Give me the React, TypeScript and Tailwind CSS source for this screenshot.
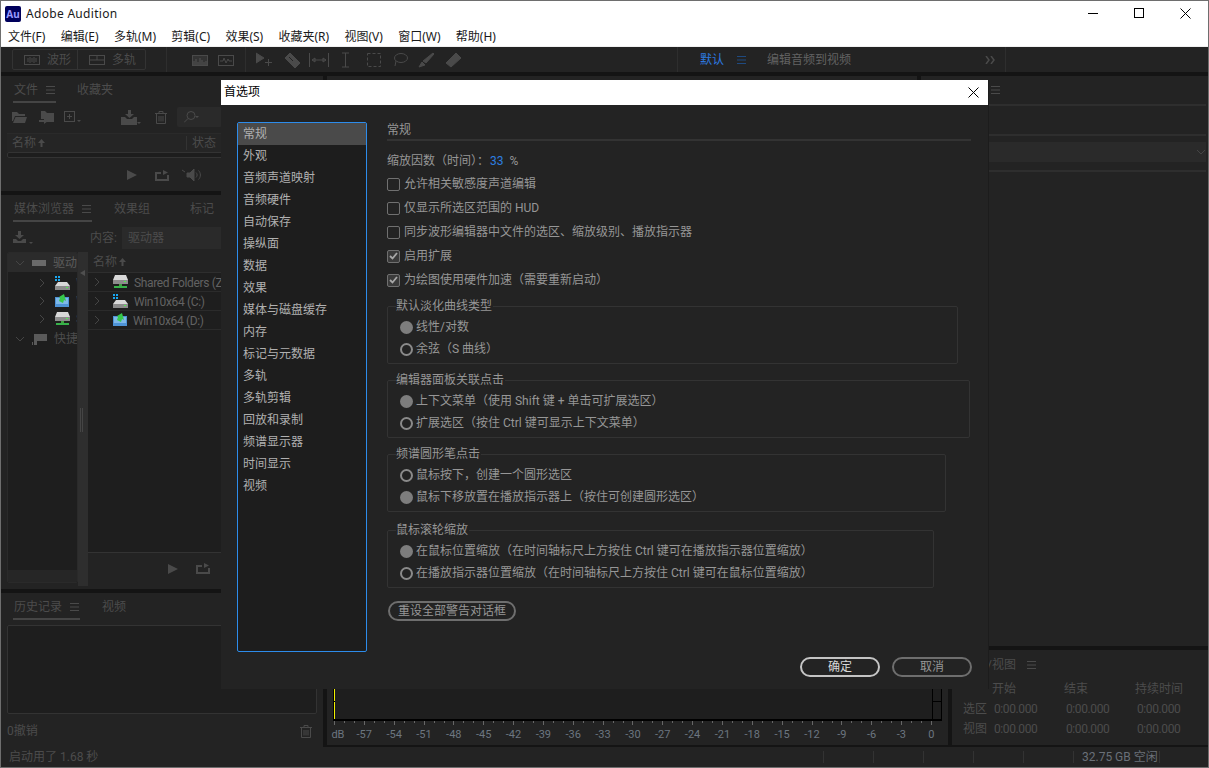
import type { ReactNode } from "react";

const menus = ["文件(F)", "编辑(E)", "多轨(M)", "剪辑(C)", "效果(S)", "收藏夹(R)", "视图(V)", "窗口(W)", "帮助(H)"];
const prefs = ["常规", "外观", "音频声道映射", "音频硬件", "自动保存", "操纵面", "数据", "效果", "媒体与磁盘缓存", "内存", "标记与元数据", "多轨", "多轨剪辑", "回放和录制", "频谱显示器", "时间显示", "视频"];
const scale = ["dB", "-57", "-54", "-51", "-48", "-45", "-42", "-39", "-36", "-33", "-30", "-27", "-24", "-21", "-18", "-15", "-12", "-9", "-6", "-3", "0"];

const Burger = ({ color = "#4a4a4a" }: { color?: string }) => (
  <svg width="9" height="8" viewBox="0 0 9 8" stroke={color} className="shrink-0">
    <path d="M0 .5h9M0 4h9M0 7.5h9" />
  </svg>
);

const Tab = ({ label, width, burger }: { label: string; width: number; burger?: boolean }) => (
  <div className="flex flex-col" style={{ width }}>
    <div className="flex h-[16px] items-center justify-between pl-px pr-px leading-4">
      <span>{label}</span>
      {burger && <Burger />}
    </div>
    {burger && <div className="mt-[3px] h-[2px] bg-[#454545]" />}
  </div>
);

const Trash = () => (
  <svg width="12" height="13" viewBox="0 0 12 13" fill="none" stroke="#4a4a4a">
    <path d="M0 2.5h12M4 2.5V.5h4v2M1.5 2.5v10h9v-10M4 5v5.5M6 5v5.5M8 5v5.5" />
  </svg>
);

const SortArrow = () => (
  <svg width="7" height="8" viewBox="0 0 7 8" fill="#4a4a4a" className="ml-[2px]"><path d="M3.500 0L7 4H4.500v4h-2V4H0z" /></svg>
);

const PlayRow = ({ speaker }: { speaker?: boolean }) => (
  <div className="flex items-center gap-[18px]">
    <svg width="10" height="10" viewBox="0 0 10 10" fill="#4a4a4a"><path d="M0 0l10 5-10 5z" /></svg>
    <svg width="14" height="11" viewBox="0 0 14 11" fill="none" stroke="#4a4a4a" strokeWidth="2">
      <path d="M6 3H1v7h12V5" />
      <path d="M8 0l5 2.500-5 2.500z" fill="#4a4a4a" stroke="none" />
    </svg>
    {speaker && (
      <svg width="20" height="12" viewBox="0 0 20 12" fill="none" stroke="#4a4a4a" className="-ml-[5px]">
        <path d="M0 1l3 2M5 4h3l4-4v12l-4-4H5z" fill="#4a4a4a" />
        <path d="M14 3.500c1.500 1.500 1.500 3.500 0 5M16.500 1.500c2.500 2.500 2.500 6.500 0 9" />
      </svg>
    )}
  </div>
);

const Drive = () => (
  <svg width="15" height="14" viewBox="0 0 15 14" className="shrink-0">
    <path d="M2 0h11l2 5H0z" fill="#d8d8d8" />
    <rect x="0" y="5" width="15" height="4" fill="#8c8c8c" />
    <rect x="11" y="6" width="2" height="1" fill="#4ef04e" />
    <rect x="6" y="9" width="3" height="2" fill="#3f9f3f" />
    <rect x="1" y="11" width="13" height="2" fill="#37b24a" />
  </svg>
);

const WinDrive = () => (
  <svg width="15" height="14" viewBox="0 0 15 14" className="shrink-0">
    <rect x="0" y="0" width="2" height="2" fill="#19a7f0" />
    <rect x="3" y="0" width="2" height="2" fill="#19a7f0" />
    <rect x="0" y="3" width="2" height="2" fill="#19a7f0" />
    <rect x="3" y="3" width="2" height="2" fill="#19a7f0" />
    <path d="M3 6h9l3 4H0z" fill="#d8d8d8" />
    <rect x="0" y="10" width="15" height="4" fill="#8c8c8c" />
    <rect x="11" y="11" width="2" height="1" fill="#4ef04e" />
  </svg>
);

const GreenDrive = () => (
  <svg width="14" height="14" viewBox="0 0 14 14" className="shrink-0">
    <rect x="0" y="3" width="14" height="10" fill="#4e93d6" />
    <rect x="1" y="4" width="12" height="6" fill="#7fb8e8" />
    <path d="M9 0L4 3l1 1-1 3 4 2 1-3 2 1z" fill="#36c84a" />
  </svg>
);

const Chevron = ({ down }: { down?: boolean }) => (
  <svg width="8" height="8" viewBox="0 0 8 8" fill="none" stroke="#454545" className="shrink-0">
    <path d={down ? "M0 2l4 4 4-4" : "M2 0l4 4-4 4"} />
  </svg>
);

const ToolIcon = ({ children, w = 16, className = "" }: { children: ReactNode; w?: number; className?: string }) => (
  <svg width={w} height="16" viewBox={`0 0 ${w} 16`} fill="none" stroke="#4a4a4a" className={`shrink-0 ${className}`}>
    {children}
  </svg>
);

const Check = ({ on, label }: { on?: boolean; label: string }) => (
  <div className="flex h-6 items-center gap-[4px]">
    <span className={`flex size-[13px] items-center justify-center rounded-[2px] border-[1.5px] border-[#707070] ${on ? "bg-[#3a3a3a]" : ""}`}>
      {on && (
        <svg width="9" height="8" viewBox="0 0 9 8" fill="none" stroke="#a8a8a8" strokeWidth="1.800">
          <path d="M1 4l2.500 2.500L8 1" />
        </svg>
      )}
    </span>
    <span>{label}</span>
  </div>
);

const Radio = ({ on, label }: { on?: boolean; label: string }) => (
  <div className="flex h-[22px] items-center gap-[3px]">
    {on ? (
      <span className="size-[13px] rounded-full bg-[#7d7d7d]" />
    ) : (
      <span className="size-[13px] rounded-full border-2 border-[#8a8a8a]" />
    )}
    <span>{label}</span>
  </div>
);

const Group = ({ title, width, mt, options }: { title: string; width: string; mt: string; options: [string, boolean][] }) => (
  <div className={`${width} ${mt} h-[58px] rounded-[2px] border border-[#333333] pl-[12px]`}>
    <div className="-mt-[9px] mb-[2px] -ml-[4px] w-fit bg-[#232323] pr-px leading-[16px]">{title}</div>
    {options.map(([label, on]) => (
      <Radio key={label} label={label} on={on} />
    ))}
  </div>
);

const PrefsDialog = () => (
  <div className="absolute top-[79px] left-[220px] flex h-[609px] w-[767px] flex-col bg-[#232323] text-[12px] text-[#969696] shadow-[1px_0_0_#1c1c1c]">
    <div className="flex h-[25px] shrink-0 items-center justify-between bg-white pb-px pl-[3px] text-black">
      <span>首选项</span>
      <svg width="11" height="11" viewBox="0 0 11 11" stroke="#000" className="mr-[9px]">
        <path d="M.5.5l10 10M10.500.5l-10 10" />
      </svg>
    </div>
    <div className="flex flex-1 pt-[17px] pl-[16px]">
      <div className="h-[530px] w-[130px] shrink-0 rounded-[2px] border border-[#2d8ceb] bg-[#1d1d1d] text-[#b0b0b0]">
        {prefs.map((p, i) => (
          <div key={p} className={`flex h-[22px] items-center pb-px pl-[5px] ${i === 0 ? "bg-[#4a4a4a]" : ""}`}>
            {p}
          </div>
        ))}
      </div>
      <div className="ml-[20px] flex-1 pr-[17px]">
        <div className="h-[19px] border-b-2 border-[#333333] leading-[16px]">常规</div>
        <div className="mt-[12px] flex h-[16px] items-center">
          缩放因数（时间）：<span className="ml-px text-[#2d7fe0]">33</span>
          <span className="ml-[6px]">%</span>
        </div>
        <div className="mt-[3px]">
          <Check label="允许相关敏感度声道编辑" />
          <Check label="仅显示所选区范围的 HUD" />
          <Check label="同步波形编辑器中文件的选区、缩放级别、播放指示器" />
          <Check on label="启用扩展" />
          <Check on label="为绘图使用硬件加速（需要重新启动）" />
        </div>
        <Group title="默认淡化曲线类型" width="w-[571px]" mt="mt-[14px]" options={[["线性/对数", true], ["余弦（S 曲线）", false]]} />
        <Group title="编辑器面板关联点击" width="w-[583px]" mt="mt-[16px]" options={[["上下文菜单（使用 Shift 键 + 单击可扩展选区）", true], ["扩展选区（按住 Ctrl 键可显示上下文菜单）", false]]} />
        <Group title="频谱圆形笔点击" width="w-[559px]" mt="mt-[16px]" options={[["鼠标按下，创建一个圆形选区", false], ["鼠标下移放置在播放指示器上（按住可创建圆形选区）", true]]} />
        <Group title="鼠标滚轮缩放" width="w-[547px]" mt="mt-[18px]" options={[["在鼠标位置缩放（在时间轴标尺上方按住 Ctrl 键可在播放指示器位置缩放）", true], ["在播放指示器位置缩放（在时间轴标尺上方按住 Ctrl 键可在鼠标位置缩放）", false]]} />
        <div className="mt-[13px] ml-px flex h-[20px] w-[128px] items-center justify-center rounded-full border-2 border-[#6e6e6e]">重设全部警告对话框</div>
      </div>
    </div>
    <div className="flex justify-end gap-[12px] pr-[16px] pb-[12px]">
      <div className="flex h-[20px] w-[80px] items-center justify-center rounded-full border-2 border-[#c4c4c4] text-[#d8d8d8]">确定</div>
      <div className="flex h-[20px] w-[80px] items-center justify-center rounded-full border-2 border-[#6e6e6e]">取消</div>
    </div>
  </div>
);

const TitleBar = () => (
  <div className="flex h-[25px] shrink-0 items-center justify-between bg-white font-['Noto_Sans','Noto_Sans_CJK_SC',sans-serif] text-[12px] text-[#1a1a1a]">
    <div className="flex items-center gap-[5px] pl-[4px]">
      <span className="flex size-[16px] items-center justify-center rounded-[2px] bg-[#00005b] text-[10px] leading-none font-bold text-[#9999ff]">Au</span>
      <span className="tracking-[.3px]">Adobe Audition</span>
    </div>
    <div className="flex">
      <span className="flex w-[46px] justify-center">
        <svg width="10" height="10" viewBox="0 0 10 10" stroke="#000"><path d="M0 5.500h10" /></svg>
      </span>
      <span className="flex w-[46px] justify-center">
        <svg width="10" height="10" viewBox="0 0 10 10" stroke="#000" fill="none"><rect x=".5" y=".5" width="9" height="9" /></svg>
      </span>
      <span className="flex w-[46px] justify-center">
        <svg width="11" height="11" viewBox="0 0 11 11" stroke="#000"><path d="M.5.5l10 10M10.500.5l-10 10" /></svg>
      </span>
    </div>
  </div>
);

const Toolbar = () => (
  <div className="flex h-[25px] shrink-0 items-center bg-[#232323] text-[12px] text-[#4c4c4c]">
    <div className="ml-[11px] flex h-[21px] w-[134px] items-center rounded-[2px] border border-[#333333]">
      <div className="flex h-full w-[65px] items-center gap-[7px] border-r border-[#333333] pl-[11px]">
        <ToolIcon>
          <rect x=".5" y="3.500" width="15" height="9" />
          <path d="M4 6v4M6 5v6M8 6v4M10 5v6M12 6v4" />
        </ToolIcon>
        <span>波形</span>
      </div>
      <div className="flex items-center gap-[7px] pl-[11px]">
        <ToolIcon>
          <rect x=".5" y="3.500" width="15" height="9" />
          <path d="M.5 8h15M8 3.500V8" />
        </ToolIcon>
        <span>多轨</span>
      </div>
    </div>
    <div className="ml-[20px] h-[25px] w-px bg-[#2e2e2e]" />
    <div className="ml-[25px] flex gap-[10px]">
      <ToolIcon>
        <rect x=".5" y="3.500" width="15" height="10" fill="#333333" />
        <path d="M2 13V9M4 13V7M6 13V10M8 13V6M10 13V8M12 13V10M14 13V9" stroke="#555555" />
      </ToolIcon>
      <ToolIcon>
        <rect x=".5" y="3.500" width="15" height="10" />
        <path d="M2 9h3l1-3 2 5 2-4 1 2h3" />
      </ToolIcon>
    </div>
    <div className="ml-[11px] h-[25px] w-px bg-[#2e2e2e]" />
    <div className="ml-[10px] flex items-center">
      <ToolIcon w={17}>
        <path d="M0 1l8 5-8 5z" fill="#4a4a4a" />
        <path d="M12.500 7v7M9 10.500h7" />
      </ToolIcon>
      <ToolIcon w={18} className="ml-[11px]">
        <path d="M1 6l5-5 10 10-5 5z" fill="#4a4a4a" />
        <path d="M5 5l4 4" stroke="#232323" />
      </ToolIcon>
      <ToolIcon w={20} className="ml-[7px]">
        <path d="M.5 1v14M19.500 1v14M3 8h14M3 8l3-2v4zM17 8l-3-2v4z" />
      </ToolIcon>
      <ToolIcon w={7} className="ml-[13px]">
        <path d="M0 1h7M0 15h7M3.500 1v14" />
      </ToolIcon>
      <ToolIcon w={14} className="ml-[18px]">
        <rect x=".5" y="1.500" width="13" height="13" strokeDasharray="3 2" />
      </ToolIcon>
      <ToolIcon w={16} className="ml-[11px]">
        <ellipse cx="9" cy="6" rx="6.500" ry="4.500" />
        <path d="M4 9l-1 5" />
      </ToolIcon>
      <ToolIcon w={16} className="ml-[10px]">
        <path d="M15 1l1 1-8 9-3-2z" fill="#4a4a4a" />
        <path d="M4 10l3 3-6 2z" fill="#4a4a4a" />
      </ToolIcon>
      <ToolIcon w={17} className="ml-[11px]">
        <path d="M1 11L11 1l5 5L6 15z" fill="#4a4a4a" />
      </ToolIcon>
    </div>
    <div className="ml-[215px] h-[25px] w-px bg-[#2e2e2e]" />
    <div className="ml-[22px] flex items-center text-[#2d7ae0]">
      <span>默认</span>
      <span className="ml-[13px]"><Burger color="#1f4a80" /></span>
    </div>
    <span className="ml-[21px] text-[#626262]">编辑音频到视频</span>
    <svg width="10" height="8" viewBox="0 0 10 8" fill="none" stroke="#4a4a4a" strokeWidth="1.500" className="ml-[134px]">
      <path d="M1 0l3 4-3 4M6 0l3 4-3 4" />
    </svg>
    <div className="ml-[10px] h-[25px] w-px bg-[#2e2e2e]" />
  </div>
);

const FilesPanel = () => (
  <div className="h-[115px] shrink-0 bg-[#232323] px-[6px] pt-[6px]">
    <div className="flex gap-[20px] pl-[6px]">
      <Tab label="文件" width={43} burger />
      <Tab label="收藏夹" width={38} />
    </div>
    <div className="mt-[4px] flex h-[20px] items-center pl-[5px]">
      <svg width="15" height="11" viewBox="0 0 15 11" fill="#4a4a4a"><path d="M0 0h5l2 2h6v2H3L1 9H0zM3.500 5H15l-2 6H1z" /></svg>
      <svg width="15" height="13" viewBox="0 0 15 13" fill="#4a4a4a" className="ml-[12px]"><path d="M2 0h4l2 2h7v9H6V8H2z" /><path d="M0 9h5V7l4 3-4 3v-2H0z" /></svg>
      <svg width="17" height="12" viewBox="0 0 17 12" fill="none" stroke="#4a4a4a" className="ml-[10px]"><rect x=".5" y=".5" width="10" height="10" /><path d="M5.500 3v5M3 5.500h5" /><path d="M13 9h4l-2 2z" fill="#4a4a4a" stroke="none" /></svg>
      <svg width="20" height="15" viewBox="0 0 20 15" fill="#4a4a4a" className="ml-[40px]"><path d="M7 0h3v4h3l-4.500 4L4 4h3zM0 7h4l2 2h5l2-2h3v8H0z" /><path d="M16 12h4l-2 2z" /></svg>
      <span className="ml-[14px]"><Trash /></span>
      <div className="ml-[10px] flex h-[20px] w-[45px] items-center rounded-[2px] bg-[#2a2a2a] pl-[7px]">
        <svg width="15" height="12" viewBox="0 0 15 12" fill="none" stroke="#4a4a4a"><circle cx="7" cy="4.500" r="4" /><path d="M4 7.500L0 11.500" /><path d="M11 5h4l-2 2z" fill="#4a4a4a" stroke="none" /></svg>
      </div>
    </div>
    <div className="mt-[6px] flex h-[19px] items-center border-t border-[#2a2a2a] bg-[#252525] pl-[5px]">
      <span>名称</span>
      <SortArrow />
      <div className="ml-[141px] h-[14px] w-px bg-[#333333]" />
      <span className="ml-[5px]">状态</span>
    </div>
    <div className="h-[6px] rounded-[2px] border border-[#333333] bg-[#1d1d1d]" />
    <div className="mt-[11px] pl-[120px]"><PlayRow speaker /></div>
  </div>
);

const MediaBrowser = () => (
  <div className="flex h-[394px] shrink-0 flex-col bg-[#232323] px-[6px] pt-[6px]">
    <div className="flex pl-[6px]">
      <Tab label="媒体浏览器" width={79} burger />
      <div className="ml-[21px]"><Tab label="效果组" width={38} /></div>
      <div className="ml-[38px]"><Tab label="标记" width={26} /></div>
    </div>
    <div className="mt-[5px] flex h-[22px] items-center pl-[6px]">
      <svg width="21" height="15" viewBox="0 0 21 15" fill="#4a4a4a"><path d="M5 0h3v4h3L6.500 8 2 4h3zM0 8h3l2 2h3l2-2h3v4H0z" /><path d="M16 11h4l-2 2z" /></svg>
      <span className="ml-[56px]">内容:</span>
      <div className="ml-[5px] flex h-[22px] w-[110px] items-center bg-[#2a2a2a] pl-[6px]">驱动器</div>
    </div>
    <div className="mt-[3px] flex h-[334px]">
      <div className="flex h-[331px] w-[71px] shrink-0 flex-col overflow-hidden rounded-[2px] border border-[#2a2a2a] bg-[#1e1e1e]">
        <div className="flex h-[19px] items-center gap-[8px] bg-[#2b2b2b] pl-[8px] text-[#5c5c5c]">
          <Chevron down />
          <span className="h-[6px] w-[15px] bg-[#6a6a6a]" />
          <span className="-ml-[1px] whitespace-nowrap">驱动</span>
        </div>
        <div className="mt-[2px] flex h-[18px] items-center gap-[9px] pl-[30px]">
          <Chevron /><WinDrive /><span className="-ml-[3px]">W</span>
        </div>
        <div className="flex h-[18px] items-center gap-[9px] pl-[30px]">
          <Chevron /><GreenDrive /><span className="-ml-[2px]">W</span>
        </div>
        <div className="flex h-[18px] items-center gap-[9px] pl-[30px]">
          <Chevron /><Drive /><span className="-ml-[3px]">S</span>
        </div>
        <div className="mt-[2px] flex h-[18px] items-center gap-[8px] pl-[8px]">
          <Chevron down />
          <svg width="15" height="14" viewBox="0 0 15 14" fill="#5a5a5a" className="shrink-0"><path d="M2 2h13v7H5v4H2zM0 10h1v3H0z" /></svg>
          <span className="-ml-[1px] whitespace-nowrap">快捷</span>
        </div>
        <div className="mt-auto h-[12px] bg-[#262626]" />
      </div>
      <div className="flex h-full w-[10px] shrink-0 flex-col bg-[#2e2e2e] pt-[18px] pl-[2px]">
        <svg width="5" height="6" viewBox="0 0 5 6" fill="#4f4f4f"><path d="M5 0v6L0 3z" /></svg>
        <div className="mt-[132px] h-[24px] w-[3px] border-x border-[#454545]" />
      </div>
      <div className="flex flex-1 flex-col">
        <div className="flex h-[20px] items-center pl-[5px]">
          <span>名称</span>
          <SortArrow />
        </div>
        <div className="h-[280px] border-t border-[#2e2e2e] bg-[#1e1e1e]">
          {[
            ["Shared Folders (Z", <Drive key="a" />],
            ["Win10x64 (C:)", <WinDrive key="b" />],
            ["Win10x64 (D:)", <GreenDrive key="c" />],
          ].map(([name, icon]) => (
            <div key={String(name)} className="flex h-[19px] items-center gap-[10px] overflow-hidden border-b border-[#2b2b2b] pl-[5px] whitespace-nowrap text-[#626262]">
              <Chevron />
              <span className="ml-[2px]">{icon}</span>
              <span className="-ml-[4px] pt-[2px] tracking-[-.35px]">{name}</span>
            </div>
          ))}
        </div>
        <div className="border-t border-[#333333] pt-[10px] pl-[80px]"><PlayRow /></div>
      </div>
    </div>
  </div>
);

const HistoryPanel = () => (
  <div className="flex flex-1 flex-col bg-[#232323] px-[6px] pt-[6px]">
    <div className="flex gap-[21px] pl-[6px]">
      <Tab label="历史记录" width={67} burger />
      <Tab label="视频" width={26} />
    </div>
    <div className="mt-[5px] h-[89px] rounded-[2px] border border-[#333333] bg-[#1e1e1e]" />
    <div className="flex h-[34px] items-center justify-between pr-[5px]">
      <span>0撤销</span>
      <Trash />
    </div>
  </div>
);

const SidePanel = () => (
  <div className="flex-1 bg-[#232323] pr-[2px]">
    <div className="flex h-[28px] items-center pl-[70px]"><Burger /></div>
    <div className="border-t-2 border-[#2e2e2e]" />
    <div className="mt-[28px] border-t-2 border-[#2e2e2e]" />
    <div className="mt-[6px] flex h-[20px] items-center justify-end bg-[#2a2a2a] pr-[1px]"><Chevron down /></div>
    <div className="mt-[8px] border-t-2 border-[#2e2e2e]" />
  </div>
);

const SelectionPanel = () => (
  <div className="flex-1 bg-[#232323] pl-[9px] text-[#4c4c4c]">
    <div className="flex h-[29px] items-center gap-[11px] pl-[2px]">
      <span>选区/视图</span>
      <Burger />
    </div>
    <div className="grid grid-cols-[31px_72px_71px_1fr] leading-[20px]">
      <span />
      <span>开始</span>
      <span>结束</span>
      <span>持续时间</span>
      <span className="pl-[2px]">选区</span>
      <span className="pl-[2px] tracking-[-.4px]">0:00.000</span>
      <span className="pl-[2px] tracking-[-.4px]">0:00.000</span>
      <span className="pl-[2px] tracking-[-.4px]">0:00.000</span>
      <span className="pl-[2px]">视图</span>
      <span className="pl-[2px] tracking-[-.4px]">0:00.000</span>
      <span className="pl-[2px] tracking-[-.4px]">0:00.000</span>
      <span className="pl-[2px] tracking-[-.4px]">0:00.000</span>
    </div>
  </div>
);

const Meter = () => (
  <div className="flex w-[621px] shrink-0 flex-col bg-[#232323]">
    <div className="flex-1" />
    <div className="flex h-[35px] shrink-0 pl-[6px]">
      <div className="relative h-[35px] w-[609px] border-b-2 border-black bg-[#1e1e1e]">
        <div className="absolute top-0 bottom-0 left-0 w-[1px] bg-black" />
        <div className="absolute top-0 bottom-0 left-px w-[1px] bg-[#f0f000]" />
        <div className="absolute top-[15px] left-px h-px w-[1px] bg-black" />
        <div className="absolute top-0 right-0 bottom-0 w-[10px] border-x border-black">
          <div className="mt-[15px] border-t border-black" />
        </div>
      </div>
    </div>
    <div className="ml-[7px] flex h-[4px] shrink-0 items-start overflow-hidden">
      {scale.map((s, i) => (
        <span key={s} className="flex w-[29.85px] shrink-0">
          <span className="h-[4px] w-px bg-[#666666]" />
          {i < scale.length - 1 && <span className="ml-[9px] h-[2px] w-px bg-[#666666]" />}
          {i < scale.length - 1 && <span className="ml-[9px] h-[2px] w-px bg-[#666666]" />}
        </span>
      ))}
    </div>
    <div className="-ml-[7.5px] flex h-[20px] shrink-0 items-center text-[11px] text-[#6c7680]">
      {scale.map((s, i) => (
        <span key={s} className={`w-[29.85px] shrink-0 text-center ${i === 0 ? "pl-[7px]" : ""}`}>{s}</span>
      ))}
    </div>
  </div>
);

const StatusBar = () => (
  <div className="flex h-[20px] shrink-0 items-center bg-[#232323] text-[12px] text-[#4c4c4c]">
    <span className="w-[822px] shrink-0 pl-[8px]">启动用了 1.68 秒</span>
    {[0, 1, 2, 3, 4].map((i) => (
      <div key={i} className="h-[12px] w-[50px] shrink-0 border-l border-[#333333]" />
    ))}
    <div className="flex h-[12px] w-[86px] shrink-0 items-center border-l border-[#333333] pl-[8px] whitespace-nowrap text-[#6a7078]">32.75 GB 空闲</div>
    <div className="h-[12px] border-l border-[#333333]" />
  </div>
);

export default function App() {
  return (
    <div className="relative flex h-[768px] w-[1209px] flex-col overflow-hidden border border-[#6e6e6e] bg-[#141414] font-['Roboto','Noto_Sans_CJK_SC',sans-serif] text-[12px]">
      <TitleBar />
      <div className="flex h-[20px] shrink-0 items-center gap-[15.3px] bg-white pt-px pl-[7px] font-['Noto_Sans','Noto_Sans_CJK_SC',sans-serif] text-[#1a1a1a]">
        {menus.map((m) => (
          <span key={m}>{m}</span>
        ))}
      </div>
      <div className="h-[1px] shrink-0 bg-[#f0f0f0]" />
      <Toolbar />
      <div className="mt-[4px] flex min-h-0 flex-1 gap-[4px] text-[#4c4c4c]">
        <div className="flex w-[322px] shrink-0 flex-col gap-[4px]">
          <FilesPanel />
          <MediaBrowser />
          <HistoryPanel />
        </div>
        <div className="flex flex-1 flex-col gap-[4px]">
          <div className="flex h-[570px] shrink-0 gap-[4px]">
            <div className="w-[590px] shrink-0 bg-[#232323]" />
            <SidePanel />
          </div>
          <div className="flex min-h-0 flex-1 gap-[4px]">
            <Meter />
            <SelectionPanel />
          </div>
        </div>
      </div>
      <div className="h-[2px] shrink-0" />
      <StatusBar />
      <PrefsDialog />
    </div>
  );
}
